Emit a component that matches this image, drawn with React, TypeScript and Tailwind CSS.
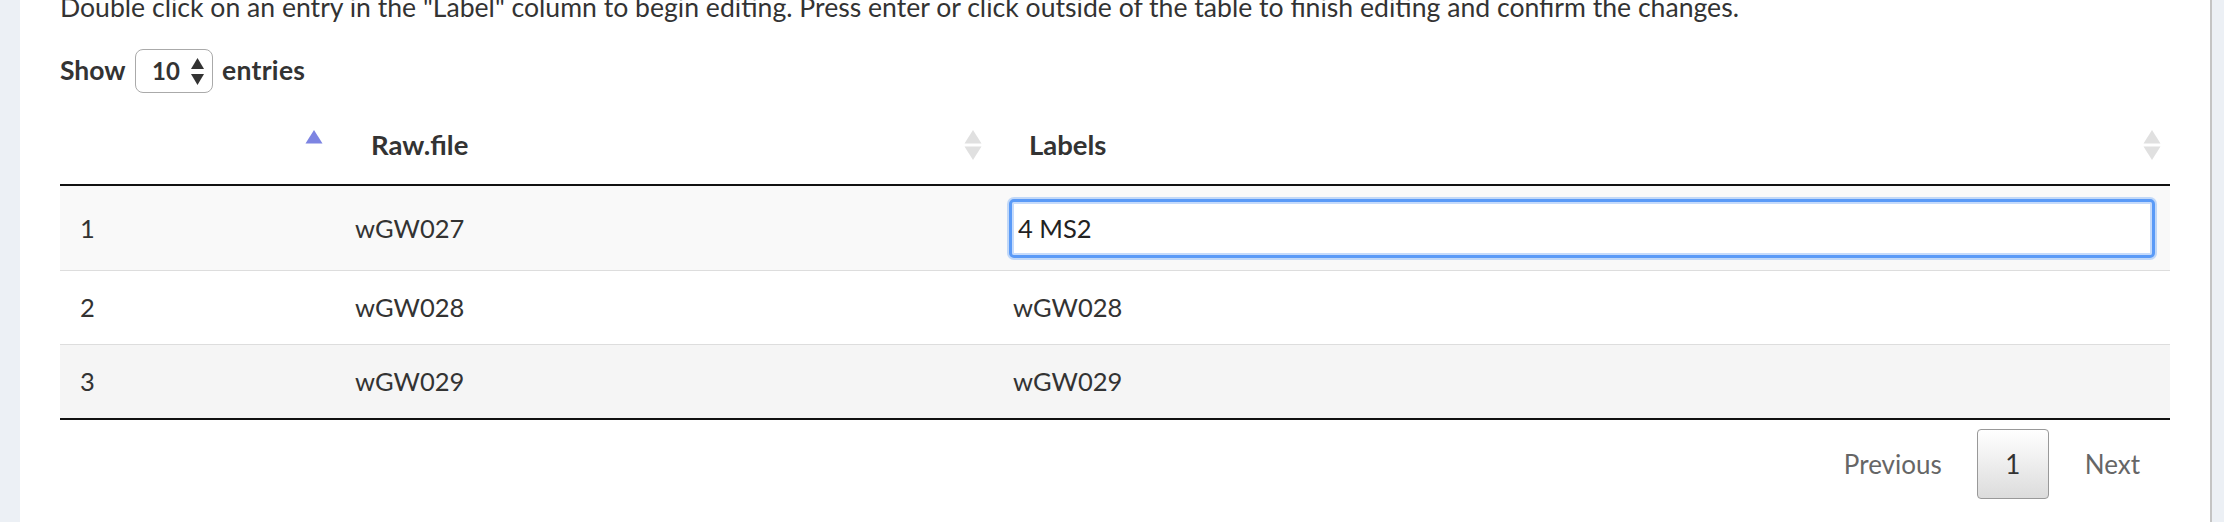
import React from 'react';

const font = { fontFamily: "'Source Sans Pro', Lato, 'Open Sans', sans-serif" };

const SortIcon: React.FC<{ up?: string; down?: string }> = ({ up = '#e0e0e0', down = '#e0e0e0' }) => (
    <svg width="18" height="30" viewBox="0 0 18 30" className="shrink-0">
        {up !== 'none' && <path d="M9 0 L17.5 13.5 L0.5 13.5 Z" fill={up} />}
        {down !== 'none' && <path d="M0.5 16.5 L17.5 16.5 L9 30 Z" fill={down} />}
    </svg>
);

const rows = [
    { id: 1, raw: 'wGW027', label: '4 MS2', editing: true },
    { id: 2, raw: 'wGW028', label: 'wGW028', editing: false },
    { id: 3, raw: 'wGW029', label: 'wGW029', editing: false },
];

const App: React.FC = () => {
    return (
        <div className="flex h-[522px] w-[2224px] overflow-hidden bg-[#ecf0f5] text-[#333]" style={font}>
            <div className="w-[20px] shrink-0" />

            <div className="w-[2190px] shrink-0 bg-white pl-[40px] pr-[40px]">
                <p className="mt-[-11px] whitespace-nowrap text-[26.6px] leading-[36px]">
                    Double click on an entry in the "Label" column to begin editing. Press enter or click outside of the table to finish editing and confirm the changes.
                </p>

                {/* length menu */}
                <div className="mt-[24px] flex h-[44px] items-center text-[26.5px] font-bold">
                    <span className="w-[66px]">Show</span>
                    <div className="ml-[9px] flex h-[44px] w-[78px] shrink-0 items-center rounded-[8px] border-[1.5px] border-[#aaa] pl-[16px] text-[24px]">
                        <span>10</span>
                        <svg width="13" height="27" viewBox="0 0 13 27" className="ml-[11px] shrink-0">
                            <path d="M6.5 0 L13 11 L0 11 Z" fill="#333" />
                            <path d="M0 16 L13 16 L6.5 27 Z" fill="#333" />
                        </svg>
                    </div>
                    <span className="ml-[9px] tracking-[0.3px]">entries</span>
                </div>

                {/* header */}
                <div className="flex h-[93px] items-center border-b-2 border-[#111] pt-[13px] text-[27.5px] font-bold">
                    <div className="flex w-[275px] shrink-0 justify-end pr-[12px]">
                        <SortIcon up="#7d84e2" down="none" />
                    </div>
                    <div className="flex w-[658px] shrink-0 items-center justify-between pl-[36px] pr-[11px]">
                        <span>Raw.file</span>
                        <SortIcon />
                    </div>
                    <div className="flex flex-1 items-center justify-between pl-[36px] pr-[9px]">
                        <span>Labels</span>
                        <SortIcon />
                    </div>
                </div>

                {/* body */}
                <div className="border-b-2 border-[#111] text-[25.5px]">
                    {rows.map((r, i) => (
                        <div
                            key={r.id}
                            className={`flex items-center ${i === 0 ? 'h-[85px]' : i === 1 ? 'h-[74px]' : 'h-[73px]'} ${
                                i === 0 ? 'bg-[#f9f9f9]' : i === 2 ? 'bg-[#f5f5f5]' : 'bg-white'
                            } ${i < rows.length - 1 ? 'border-b border-[#ddd]' : ''}`}
                        >
                            <div className="w-[275px] shrink-0 pl-[20px]">{r.id}</div>
                            <div className="w-[658px] shrink-0 pl-[20px]">{r.raw}</div>
                            {r.editing ? (
                                <div className="flex-1 pr-[15px] pl-[16px]">
                                    <input
                                        readOnly
                                        value={r.label}
                                        className="block h-[59px] w-full rounded-[5px] border-[3px] border-[#5a9af7] bg-white pl-[6px] text-[25.5px] text-[#222] shadow-[0_0_0_2px_rgba(90,154,247,0.35),inset_0_0_0_2px_#c6dbfb] outline-none"
                                    />
                                </div>
                            ) : (
                                <div className="flex-1 pl-[20px]">{r.label}</div>
                            )}
                        </div>
                    ))}
                </div>

                {/* pagination */}
                <div className="mt-[9px] flex items-center justify-end pr-[30px] text-[26px] text-[#666]">
                    <span>Previous</span>
                    <div className="ml-[35px] flex h-[70px] w-[72px] items-center justify-center rounded-[4px] border border-[#999] bg-gradient-to-b from-white to-[#dcdcdc] text-[#333]">
                        1
                    </div>
                    <span className="ml-[36px]">Next</span>
                </div>
            </div>

            <div className="flex-1 border-l-2 border-[#c4c4c4]" />
        </div>
    );
};

export default App;
